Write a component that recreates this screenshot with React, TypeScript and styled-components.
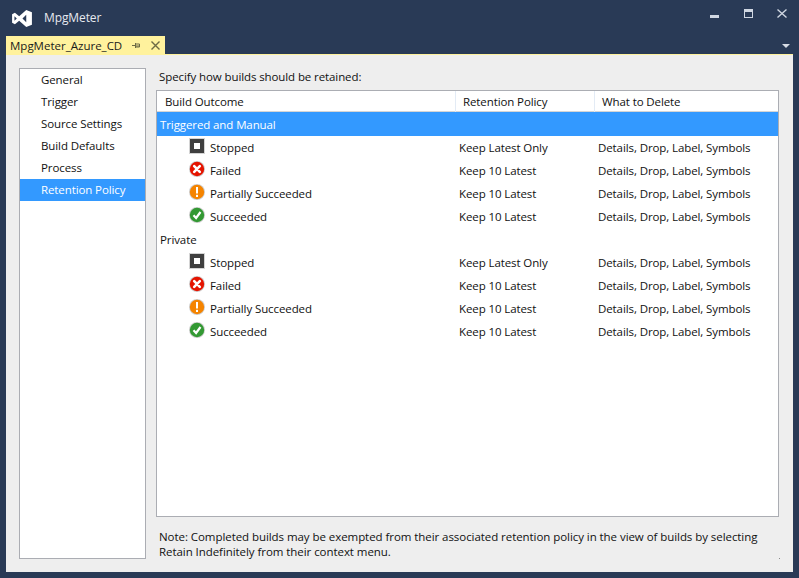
import React from "react";
import styled, { createGlobalStyle } from "styled-components";

const GlobalStyle = createGlobalStyle`
  html, body {
    margin: 0;
    padding: 0;
    background: #293a56;
  }
  body {
    font-family: "Open Sans", "Noto Sans", sans-serif;
    font-size: 11.5px;
    letter-spacing: -0.1px;
    color: #111;
  }
`;

const Window = styled.div`
  width: 799px;
  height: 578px;
  box-sizing: border-box;
  padding: 0 6px 6px;
  display: flex;
  flex-direction: column;
  overflow: hidden;
`;

const TitleBar = styled.div`
  height: 36px;
  flex: none;
  display: flex;
  align-items: center;
  color: #e6e9ef;
  padding-left: 6px;
  padding-right: 3px;
`;

const Logo = styled.svg`
  width: 20px;
  height: 17px;
  margin-top: 1px;
`;

const AppName = styled.span`
  margin-left: 12px;
  margin-top: -1px;
  font-size: 12px;
`;

const WindowButtons = styled.div`
  margin-left: auto;
  margin-top: -8px;
  display: flex;
  gap: 18px;
  align-items: center;
`;

const WindowIcon = styled.svg`
  width: 16px;
  height: 16px;
  display: block;
`;

const TabStrip = styled.div`
  height: 18px;
  flex: none;
  display: flex;
  align-items: stretch;
`;

const Tab = styled.div`
  width: 159px;
  box-sizing: border-box;
  background: #fff29d;
  display: flex;
  align-items: center;
  padding-left: 4px;
  color: #1a1a1a;
`;

const TabTitle = styled.span`
  width: 121px;
  flex: none;
  letter-spacing: 0;
`;

const TabIcon = styled.svg`
  width: 11px;
  height: 11px;
  flex: none;
`;

const CloseIcon = styled(TabIcon)`
  margin-left: 8px;
`;

const TabMenu = styled.div`
  margin-left: auto;
  margin-right: 3px;
  margin-top: 8px;
  width: 0;
  height: 0;
  border-left: 4px solid transparent;
  border-right: 4px solid transparent;
  border-top: 4px solid #d8dde6;
`;

const Panel = styled.div`
  flex: 1;
  min-height: 0;
  background: #eeeeee;
  border-top: 1px solid #fff29d;
  display: flex;
  gap: 10px;
  padding: 13px 14px 13px 13px;
  position: relative;
`;

const SideList = styled.ul`
  width: 127px;
  box-sizing: border-box;
  margin: 0;
  padding: 0;
  flex: none;
  list-style: none;
  background: #fff;
  border: 1px solid #abadb3;
`;

const SideItem = styled.li<{ $active?: boolean }>`
  height: 22px;
  line-height: 21px;
  padding-left: 21px;
  background: ${(p) => (p.$active ? "#3399ff" : "transparent")};
  color: ${(p) => (p.$active ? "#fff" : "#111")};
`;

const Main = styled.div`
  flex: 1;
  min-width: 0;
  display: flex;
  flex-direction: column;
`;

const Caption = styled.div`
  height: 22px;
  line-height: 17px;
  padding-left: 3px;
`;

const Table = styled.div`
  height: 427px;
  flex: none;
  box-sizing: border-box;
  background: #fff;
  border: 1px solid #abadb3;
`;

const HeaderRow = styled.div`
  display: grid;
  grid-template-columns: 299px 139px 1fr;
  height: 21px;
  box-sizing: border-box;
  border-bottom: 1px solid #d5d5d5;
`;

const HeaderCell = styled.div`
  padding-left: 7px;
  line-height: 21px;
  border-right: 1px solid #e3ebf5;
  &:first-child {
    padding-left: 8px;
  }
  &:last-child {
    border-right: none;
  }
`;

const GroupRow = styled.div<{ $selected?: boolean }>`
  height: ${(p) => (p.$selected ? 24 : 23)}px;
  line-height: ${(p) => (p.$selected ? 25 : 23)}px;
  padding-left: 3px;
  background: ${(p) => (p.$selected ? "#3399ff" : "transparent")};
  color: ${(p) => (p.$selected ? "#fff" : "#111")};
`;

const Row = styled.div`
  display: grid;
  grid-template-columns: 302px 139px 1fr;
  height: 23px;
  line-height: 23px;
  align-items: start;
`;

const OutcomeCell = styled.div`
  display: flex;
  align-items: flex-start;
  padding-left: 32px;
  gap: 5px;
`;

const StatusIcon = styled.svg`
  width: 16px;
  height: 16px;
  flex: none;
  margin-top: 2px;
`;

const Note = styled.p`
  margin: 12px 0 0;
  padding-left: 3px;
  line-height: 15px;
  letter-spacing: -0.06px;
`;

const Grip = styled.span`
  position: absolute;
  right: 13px;
  bottom: 13px;
  width: 1px;
  height: 1px;
  background: #8a8a8a;
`;

type Status = "stopped" | "failed" | "partial" | "succeeded";

function Icon({ status }: { status: Status }) {
  if (status === "stopped") {
    return (
      <StatusIcon viewBox="0 0 16 16">
        <rect x="0" y="0" width="16" height="16" fill="#d4d4d4" />
        <rect x="1" y="1" width="14" height="14" fill="#3f3f3f" />
        <rect x="5" y="5" width="6" height="6" fill="#fff" />
      </StatusIcon>
    );
  }
  const fill = status === "failed" ? "#e51400" : status === "partial" ? "#f58400" : "#339933";
  return (
    <StatusIcon viewBox="0 0 16 16">
      <circle cx="8" cy="8" r="8" fill="#cfcfcf" />
      <circle cx="8" cy="8" r="7.2" fill={fill} />
      {status === "failed" && (
        <path d="M5.200 5.200l5.600 5.600M10.800 5.200l-5.600 5.600" stroke="#fff" strokeWidth="2.600" strokeLinecap="round" fill="none" />
      )}
      {status === "partial" && (
        <>
          <rect x="7" y="3" width="2" height="6.500" fill="#fff" />
          <rect x="7" y="10.800" width="2" height="2.200" fill="#fff" />
        </>
      )}
      {status === "succeeded" && <path d="M4.500 8.200l2.600 2.800 4.400-6" stroke="#fff" strokeWidth="2.200" fill="none" />}
    </StatusIcon>
  );
}

const outcomes: { status: Status; label: string; policy: string }[] = [
  { status: "stopped", label: "Stopped", policy: "Keep Latest Only" },
  { status: "failed", label: "Failed", policy: "Keep 10 Latest" },
  { status: "partial", label: "Partially Succeeded", policy: "Keep 10 Latest" },
  { status: "succeeded", label: "Succeeded", policy: "Keep 10 Latest" },
];

const sideItems = ["General", "Trigger", "Source Settings", "Build Defaults", "Process", "Retention Policy"];

function Rows() {
  return (
    <>
      {outcomes.map((o) => (
        <Row key={o.label}>
          <OutcomeCell>
            <Icon status={o.status} />
            {o.label}
          </OutcomeCell>
          <div>{o.policy}</div>
          <div>Details, Drop, Label, Symbols</div>
        </Row>
      ))}
    </>
  );
}

export default function App() {
  return (
    <Window>
      <GlobalStyle />
      <TitleBar>
        <Logo viewBox="0 0 21 18">
          <path
            fill="#fff"
            d="M15 0l6 2.500v13L15 18 7.500 11.500 3 15l-3-1.500v-9L3 3l4.500 3.500zM15 5l-4 4 4 4zM2.500 6.500v5L5 9z"
            fillRule="evenodd"
          />
        </Logo>
        <AppName>MpgMeter</AppName>
        <WindowButtons>
          <WindowIcon viewBox="0 0 16 16">
            <rect x="4" y="9" width="9" height="3" fill="#d0d7e2" />
          </WindowIcon>
          <WindowIcon viewBox="0 0 16 16">
            <path d="M4 3h9v9H4zM5 6v5h7V6z" fill="#d0d7e2" fillRule="evenodd" />
          </WindowIcon>
          <WindowIcon viewBox="0 0 16 16">
            <path d="M3.500 3.500l9 8M12.500 3.500l-9 8" stroke="#d0d7e2" strokeWidth="1.400" fill="none" />
          </WindowIcon>
        </WindowButtons>
      </TitleBar>
      <TabStrip>
        <Tab>
          <TabTitle>MpgMeter_Azure_CD</TabTitle>
          <TabIcon viewBox="0 0 11 11">
            <path d="M1 5.500h3M4.500 3v5M4.500 4h4v3h-4M5 6h3" stroke="#6d6a45" strokeWidth="1" fill="none" />
          </TabIcon>
          <CloseIcon viewBox="0 0 11 11">
            <path d="M1.500 1.500l8 8M9.500 1.500l-8 8" stroke="#6d6a45" strokeWidth="1.400" fill="none" />
          </CloseIcon>
        </Tab>
        <TabMenu />
      </TabStrip>
      <Panel>
        <SideList>
          {sideItems.map((item) => (
            <SideItem key={item} $active={item === "Retention Policy"}>
              {item}
            </SideItem>
          ))}
        </SideList>
        <Main>
          <Caption>Specify how builds should be retained:</Caption>
          <Table>
            <HeaderRow>
              <HeaderCell>Build Outcome</HeaderCell>
              <HeaderCell>Retention Policy</HeaderCell>
              <HeaderCell>What to Delete</HeaderCell>
            </HeaderRow>
            <GroupRow $selected>Triggered and Manual</GroupRow>
            <Rows />
            <GroupRow>Private</GroupRow>
            <Rows />
          </Table>
          <Note>
            Note: Completed builds may be exempted from their associated retention policy in the view of builds by
            selecting Retain Indefinitely from their context menu.
          </Note>
        </Main>
        <Grip />
      </Panel>
    </Window>
  );
}
